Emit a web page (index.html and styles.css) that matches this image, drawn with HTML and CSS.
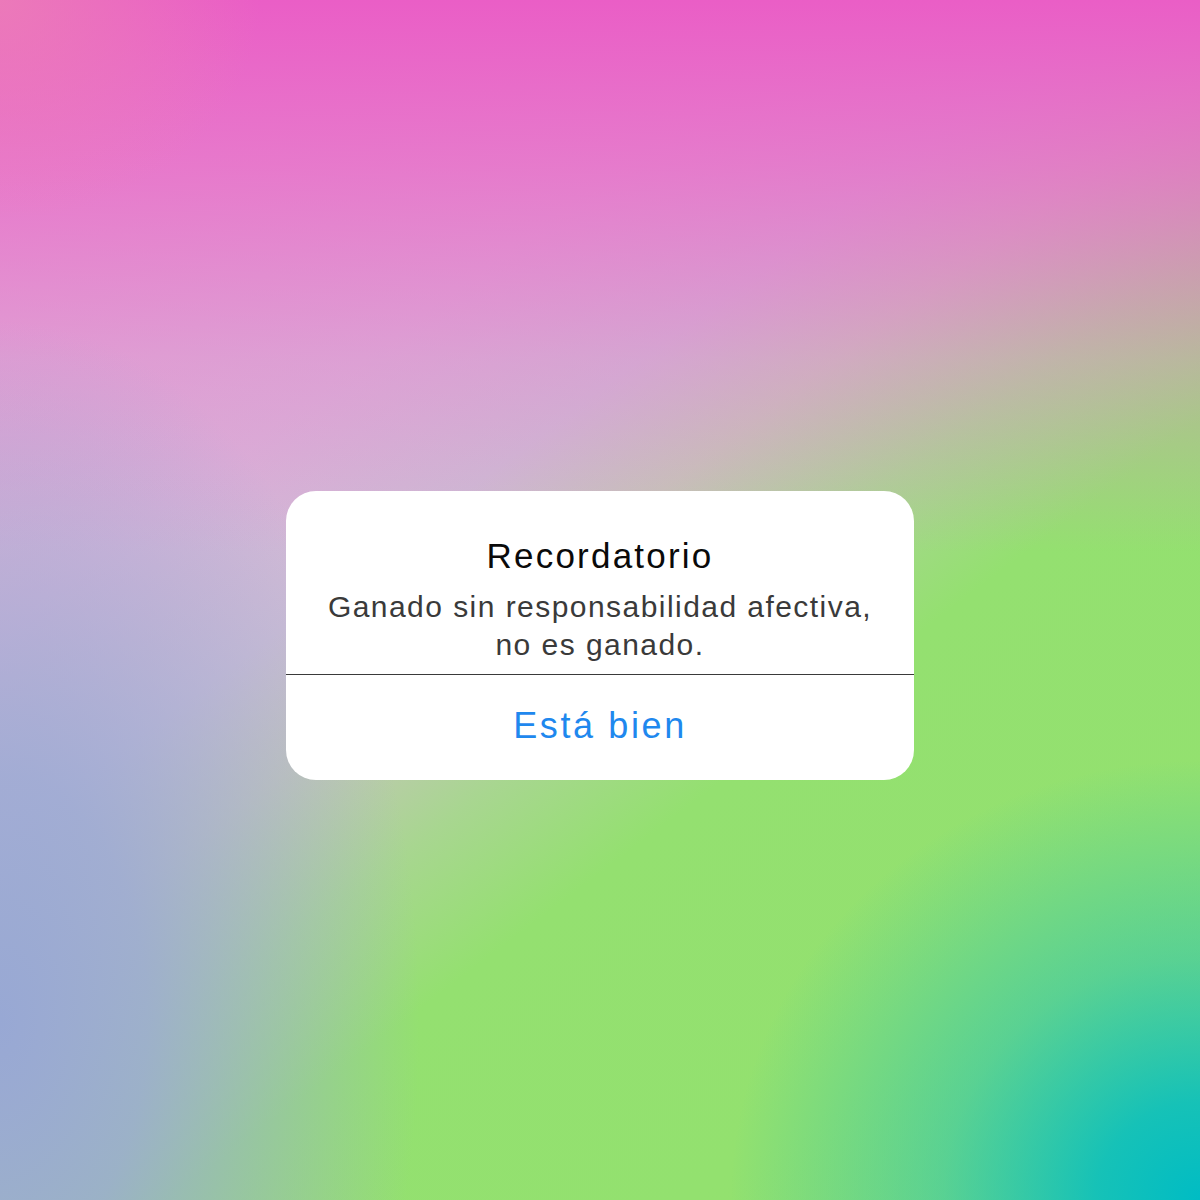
FILE: index.html
```html
<!DOCTYPE html>
<html lang="es">
<head>
    <meta charset="UTF-8">
    <meta name="viewport" content="width=device-width, initial-scale=1.0">
    <title>Recordatorio</title>
    <link rel="stylesheet" href="styles.css">
</head>
<body>

    <div class="screen">
        <!-- Alert dialog -->
        <div class="alert">
            <div class="alert-body">
                <h1 class="alert-title">Recordatorio</h1>
                <p class="alert-message">Ganado sin responsabilidad afectiva,<br>no es ganado.</p>
            </div>
            <button class="alert-action">Está bien</button>
        </div>
    </div>

</body>
</html>
```

FILE: styles.css
```css
body {
    margin: 0;
    font-family: "Liberation Sans", Arial, Helvetica, sans-serif;
}
.screen {
    width: 1200px;
    height: 1200px;
    box-sizing: border-box;
    padding-top: 491px;
    display: flex;
    justify-content: center;
    align-items: flex-start;
    background:
        radial-gradient(ellipse 470px 440px at 100% 100%, #00bcc4 0%, rgba(0, 188, 196, 0.85) 22%, rgba(20, 190, 190, 0.45) 55%, rgba(60, 200, 170, 0) 100%),
        radial-gradient(ellipse 420px 700px at 0% 85%, rgba(152, 168, 212, 1) 0%, rgba(155, 170, 212, 0.85) 35%, rgba(165, 175, 210, 0) 100%),
        radial-gradient(ellipse 260px 220px at 0% 0%, rgba(236, 128, 182, 0.8) 0%, rgba(236, 128, 182, 0) 100%),
        linear-gradient(180deg, rgba(234, 94, 198, 1) 0%, rgba(234, 104, 200, 0.75) 14%, rgba(228, 130, 206, 0.4) 30%, rgba(224, 150, 210, 0) 46%),
        linear-gradient(143deg, #e4a4d4 0%, #d8b4d8 30%, #ccbcd4 40%, #c4c6b8 47%, #a8d690 55%, #94e070 63%, #92e26e 100%);
}
.alert {
    width: 628px;
    background-color: #fff;
    border-radius: 30px;
    overflow: hidden;
    text-align: center;
}
.alert-body {
    padding: 44px 20px 10px;
    border-bottom: 1px solid #3a3a3a;
}
.alert-title {
    margin: 0;
    font-size: 35px;
    line-height: 42px;
    font-weight: normal;
    letter-spacing: 2.2px;
    color: #0a0a0a;
}
.alert-message {
    margin: 11px 0 0;
    font-size: 30px;
    line-height: 38px;
    letter-spacing: 1.45px;
    color: #3a3a3a;
}
.alert-action {
    display: block;
    width: 100%;
    height: 105px;
    padding: 30px 0 33px;
    border: none;
    background: none;
    font-family: inherit;
    font-size: 36px;
    line-height: 42px;
    letter-spacing: 2.6px;
    color: #1f88ee;
    cursor: pointer;
}
```
